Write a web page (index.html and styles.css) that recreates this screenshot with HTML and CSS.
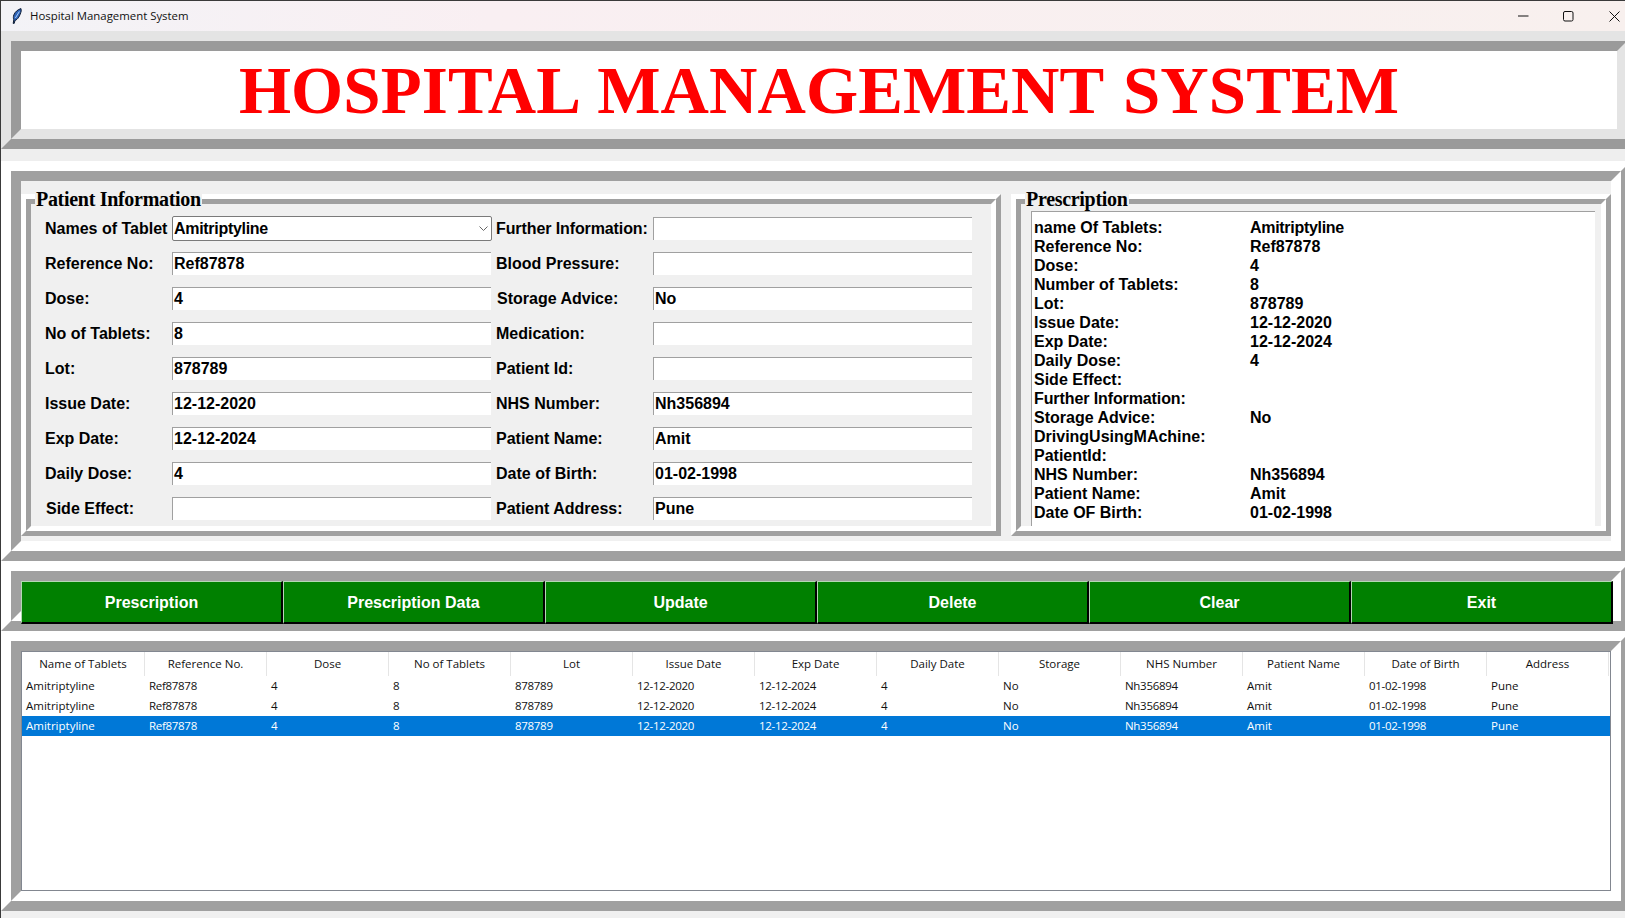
FILE: index.html
```html
<!DOCTYPE html>
<html lang="en">
<head>
<meta charset="utf-8">
<title>Hospital Management System</title>
<link rel="stylesheet" href="styles.css">
</head>
<body>
<div class="window">
  <header class="titlebar">
    <svg class="app-icon" width="10" height="16" viewBox="0 0 10 16"><path d="M9 .6C6 1.400 3 3.800 1.800 7 1.200 8.800 1.300 10.500 1.800 11.800L1.200 15.400 2.200 15.400 3 12.400C5.800 11.600 8 7.800 9.200 3Z" fill="#2e63b8" stroke="#0e1c33" stroke-width="1"/><path d="M7.400 3.500 3.400 10" stroke="#a9cdf5" stroke-width="1" fill="none"/></svg>
    <span class="app-title">Hospital Management System</span>
    <div class="win-controls">
      <svg class="ctl-min" width="11" height="2" viewBox="0 0 11 2"><path d="M0 1H10.500" stroke="#111" stroke-width="1"/></svg>
      <svg class="ctl-max" width="11" height="11" viewBox="0 0 11 11"><rect x=".5" y=".5" width="9.500" height="9.500" rx="1.500" fill="none" stroke="#111" stroke-width="1"/></svg>
      <svg class="ctl-close" width="11" height="11" viewBox="0 0 11 11"><path d="M.5 .5 10.500 10.500M10.500 .5 .5 10.500" stroke="#111" stroke-width="1" fill="none"/></svg>
    </div>
  </header>

  <section class="ridge ridge-head">
    <div class="ridge-in">
      <h1 class="head-title">HOSPITAL MANAGEMENT SYSTEM</h1>
    </div>
  </section>
  <div class="head-gap"></div>

  <section class="ridge ridge-wide">
    <div class="ridge-in info-body">
      <div class="lf lf-patient">
        <div class="lf-in">
          <span class="lf-label lf-label-a">Patient Information</span>
          <div class="form">
            <label class="lbl">Names of Tablet</label>
            <div class="combo"><span class="tight">Amitriptyline</span><svg width="9" height="5" viewBox="0 0 9 5"><path d="M.5 .5 4.500 4.500 8.500 .5" fill="none" stroke="#666" stroke-width="1"/></svg></div>
            <label class="lbl lbl-r lbl-further">Further Information:</label>
            <div class="entry"></div>

            <label class="lbl">Reference No:</label>
            <div class="entry">Ref87878</div>
            <label class="lbl lbl-r">Blood Pressure:</label>
            <div class="entry"></div>

            <label class="lbl">Dose:</label>
            <div class="entry">4</div>
            <label class="lbl lbl-r lbl-s">Storage Advice:</label>
            <div class="entry">No</div>

            <label class="lbl">No of Tablets:</label>
            <div class="entry">8</div>
            <label class="lbl lbl-r">Medication:</label>
            <div class="entry"></div>

            <label class="lbl">Lot:</label>
            <div class="entry">878789</div>
            <label class="lbl lbl-r">Patient Id:</label>
            <div class="entry"></div>

            <label class="lbl">Issue Date:</label>
            <div class="entry">12-12-2020</div>
            <label class="lbl lbl-r">NHS Number:</label>
            <div class="entry">Nh356894</div>

            <label class="lbl">Exp Date:</label>
            <div class="entry">12-12-2024</div>
            <label class="lbl lbl-r">Patient Name:</label>
            <div class="entry">Amit</div>

            <label class="lbl">Daily Dose:</label>
            <div class="entry">4</div>
            <label class="lbl lbl-r">Date of Birth:</label>
            <div class="entry">01-02-1998</div>

            <label class="lbl lbl-side">Side Effect:</label>
            <div class="entry"></div>
            <label class="lbl lbl-r">Patient Address:</label>
            <div class="entry">Pune</div>
          </div>
        </div>
      </div>

      <div class="lf lf-rx">
        <div class="lf-in">
          <span class="lf-label lf-label-b">Prescription</span>
          <div class="rx-text">
            <span>name Of Tablets:</span><span class="tight">Amitriptyline</span>
            <span>Reference No:</span><span>Ref87878</span>
            <span>Dose:</span><span>4</span>
            <span>Number of Tablets:</span><span>8</span>
            <span>Lot:</span><span>878789</span>
            <span>Issue Date:</span><span>12-12-2020</span>
            <span>Exp Date:</span><span>12-12-2024</span>
            <span>Daily Dose:</span><span>4</span>
            <span>Side Effect:</span><span></span>
            <span class="lbl-further">Further Information:</span><span></span>
            <span>Storage Advice:</span><span>No</span>
            <span>DrivingUsingMAchine:</span><span></span>
            <span>PatientId:</span><span></span>
            <span>NHS Number:</span><span>Nh356894</span>
            <span>Patient Name:</span><span>Amit</span>
            <span>Date OF Birth:</span><span>01-02-1998</span>
          </div>
        </div>
      </div>
    </div>
  </section>

  <section class="ridge ridge-wide">
    <div class="ridge-in btn-body">
      <button class="btn b1">Prescription</button>
      <button class="btn b2">Prescription Data</button>
      <button class="btn b3">Update</button>
      <button class="btn b3">Delete</button>
      <button class="btn b2">Clear</button>
      <button class="btn b2">Exit</button>
    </div>
  </section>

  <section class="ridge ridge-wide">
    <div class="ridge-in table-body">
      <div class="tree">
        <div class="tree-head">
          <span>Name of Tablets</span><span>Reference No.</span><span>Dose</span><span>No of Tablets</span><span>Lot</span><span>Issue Date</span><span>Exp Date</span><span>Daily Date</span><span>Storage</span><span>NHS Number</span><span>Patient Name</span><span>Date of Birth</span><span>Address</span>
        </div>
        <div class="tree-row">
          <span>Amitriptyline</span><span>Ref87878</span><span>4</span><span>8</span><span>878789</span><span>12-12-2020</span><span>12-12-2024</span><span>4</span><span>No</span><span>Nh356894</span><span>Amit</span><span>01-02-1998</span><span>Pune</span>
        </div>
        <div class="tree-row">
          <span>Amitriptyline</span><span>Ref87878</span><span>4</span><span>8</span><span>878789</span><span>12-12-2020</span><span>12-12-2024</span><span>4</span><span>No</span><span>Nh356894</span><span>Amit</span><span>01-02-1998</span><span>Pune</span>
        </div>
        <div class="tree-row is-selected">
          <span>Amitriptyline</span><span>Ref87878</span><span>4</span><span>8</span><span>878789</span><span>12-12-2020</span><span>12-12-2024</span><span>4</span><span>No</span><span>Nh356894</span><span>Amit</span><span>01-02-1998</span><span>Pune</span>
        </div>
      </div>
    </div>
  </section>
</div>
</body>
</html>
```

FILE: styles.css
```css
* { box-sizing: border-box; }
html, body { margin: 0; padding: 0; overflow: hidden; }
body { width: 1625px; height: 918px; background: #f0f0f0; }

.window {
  width: 1625px;
  height: 918px;
  overflow: hidden;
  background: #f0f0f0;
  border-left: 1px solid #3a3a3a;
  font-family: "Liberation Sans", Arial, sans-serif;
  color: #000;
}

.titlebar {
  height: 31px;
  border-top: 1px solid #3a3a3a;
  background: linear-gradient(90deg, #f3f3f7 0%, #f9eff2 30%, #f8f0ee 100%);
  display: flex;
  align-items: center;
  position: relative;
  font-family: "Open Sans", "Noto Sans", sans-serif;
  font-size: 11.4px;
}
.app-icon { margin-left: 11px; margin-top: -1px; }
.app-title { margin-left: 8px; margin-bottom: 2px; color: #111; }
.win-controls { margin-left: auto; display: flex; align-items: center; padding-right: 5px; }
.ctl-min { margin-right: 34px; }
.ctl-max { margin-right: 35px; }

/* Tk-style ridge: two nested mitred borders */
.ridge {
  border-style: solid;
  border-width: 10px;
  border-color: #fff #a0a0a0 #a0a0a0 #fff;
  width: 1630px;
  flex: none;
}
.ridge-in {
  border-style: solid;
  border-width: 10px;
  border-color: #a0a0a0 #fff #fff #a0a0a0;
}
.ridge-head {
  width: 1636px;
  border-color: #e4e4e4 #9a9a9a #9a9a9a #e4e4e4;
}
.ridge-head .ridge-in {
  border-color: #9a9a9a #e4e4e4 #e4e4e4 #9a9a9a;
  height: 98px;
  background: #fff;
  display: flex;
  align-items: center;
  justify-content: center;
}
.head-title {
  margin: 0;
  font-family: "Liberation Serif", "Times New Roman", serif;
  font-weight: 700;
  font-size: 67px;
  line-height: 78px;
  letter-spacing: .1px;
  word-spacing: 3px;
  color: #f00;
  white-space: nowrap;
}
.head-gap { height: 12px; background: #eeeeee; }

.info-body {
  height: 380px;
  background: #f0f0f0;
  display: flex;
  gap: 10px;
  padding-top: 13px;
  padding-bottom: 5px;
}

.lf {
  border-style: solid;
  border-width: 5px;
  border-color: #fff #a0a0a0 #a0a0a0 #fff;
  height: 342px;
  flex: none;
}
.lf-patient { width: 980px; }
.lf-rx { width: 600px; }
.lf-in {
  border-style: solid;
  border-width: 5px;
  border-color: #a0a0a0 #fff #fff #a0a0a0;
  height: 332px;
  position: relative;
}
.lf-label {
  position: absolute;
  top: -17px;
  left: 4px;
  background: #f0f0f0;
  padding: 0 1px;
  font-family: "Liberation Serif", "Times New Roman", serif;
  font-weight: 700;
  font-size: 20px;
  line-height: 24px;
  letter-spacing: -.3px;
  white-space: nowrap;
}

.form {
  display: grid;
  grid-template-columns: 141px 319px 162px 319px;
  grid-auto-rows: 23px;
  row-gap: 12px;
  padding-top: 13px;
  font-size: 16px;
  font-weight: 700;
}
.lbl {
  padding-left: 14px;
  line-height: 23px;
  white-space: nowrap;
}
.lbl-side { padding-left: 15px; }
.lbl-r { padding-left: 5px; }
.lbl-s { padding-left: 6px; }
.lbl-further { letter-spacing: -.1px; }
.tight { letter-spacing: -.3px; }

.entry {
  background: #fff;
  border-top: 1px solid #a0a0a0;
  border-left: 1px solid #a0a0a0;
  padding-left: 1px;
  line-height: 21px;
  white-space: nowrap;
}
.combo {
  background: #fff;
  border: 1px solid #7a7a7a;
  border-radius: 2px;
  width: 320px;
  height: 25px;
  margin-top: -1px;
  padding: 0 3px 0 1px;
  display: flex;
  align-items: center;
  justify-content: space-between;
  line-height: 23px;
}

.rx-text {
  margin: 7px 0 0 10px;
  width: 564px;
  height: 315px;
  background: #fff;
  border-top: 1px solid #a0a0a0;
  border-left: 1px solid #a0a0a0;
  padding: 6px 0 0 2px;
  display: grid;
  grid-template-columns: 216px 1fr;
  grid-auto-rows: 19px;
  font-size: 16px;
  font-weight: 700;
  line-height: 19px;
  align-content: start;
  white-space: nowrap;
}

.btn-body {
  height: 50px;
  background: #fff;
  display: flex;
  align-items: flex-start;
}
.btn {
  display: block;
  height: 43px;
  margin: 0;
  padding: 2px 0 0;
  flex: none;
  background: #008000;
  color: #fff;
  font-family: "Liberation Sans", Arial, sans-serif;
  font-size: 16px;
  font-weight: 700;
  border-style: solid;
  border-width: 1px 2px 2px 1px;
  border-color: #b4d8b4 #000 #000 #b4d8b4;
}
.b1 { width: 262px; }
.b2 { width: 262px; }
.b3 { width: 272px; }

.table-body {
  height: 260px;
  background: #fff;
}
.tree {
  height: 240px;
  border: 1px solid #828790;
  background: #fff;
  font-family: "Open Sans", "Noto Sans", sans-serif;
  font-size: 11.5px;
}
.tree-head, .tree-row {
  display: grid;
  grid-template-columns: 123px repeat(12, 122px);
}
.tree-head { height: 24px; }
.tree-head span {
  text-align: center;
  line-height: 24px;
  border-right: 1px solid #e5e5e5;
  color: #111;
  white-space: nowrap;
}
.tree-row { height: 20px; }
.tree-row span {
  padding-left: 4px;
  line-height: 20px;
  color: #111;
  white-space: nowrap;
}
.tree-row span:nth-child(2),
.tree-row span:nth-child(5),
.tree-row span:nth-child(6),
.tree-row span:nth-child(7),
.tree-row span:nth-child(10),
.tree-row span:nth-child(12) { letter-spacing: -.3px; }
.is-selected { background: #0078d7; }
.is-selected span { color: #fff; }
```
